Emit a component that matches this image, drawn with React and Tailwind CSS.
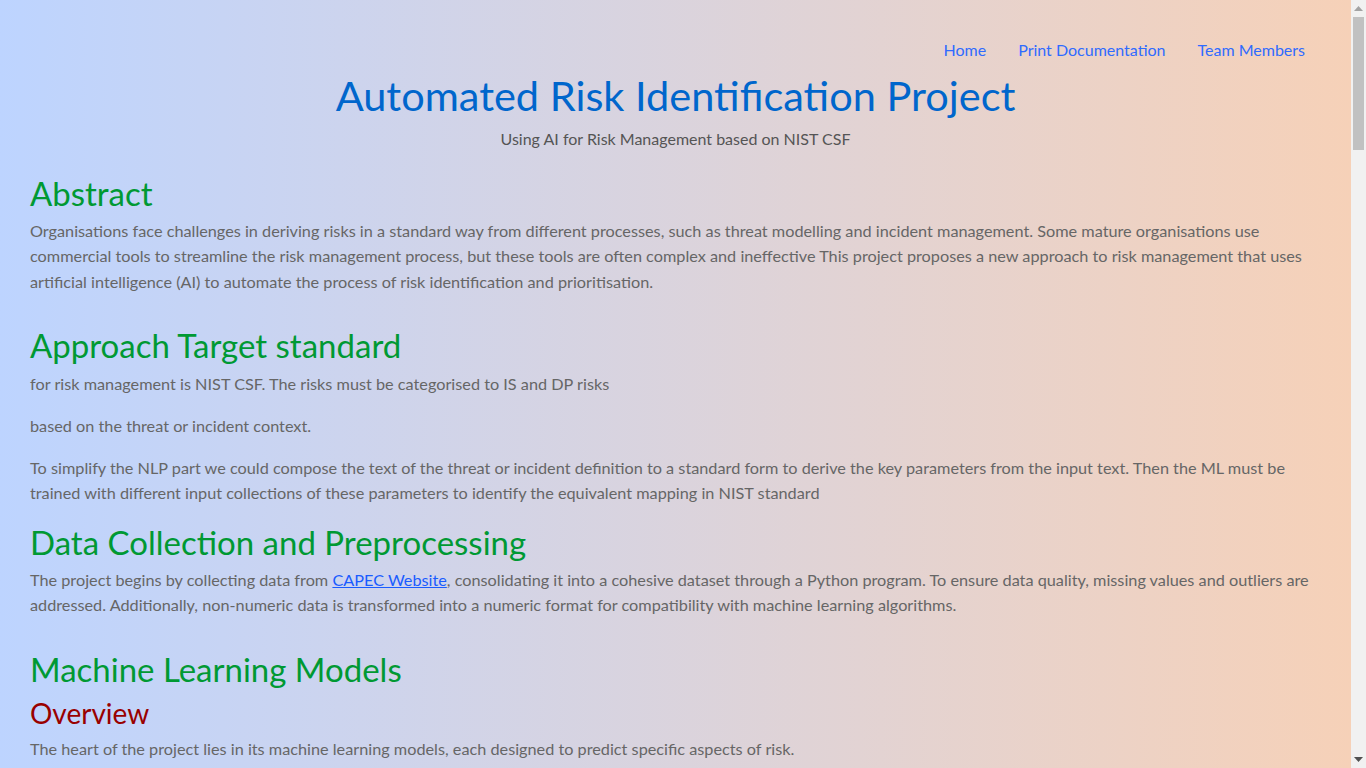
const font = { fontFamily: 'Lato, "Open Sans", sans-serif' };

function NavLink({ children }) {
  return (
    <a href="#" className="px-4 text-[16px] leading-[24px] text-[#2f6bff]">
      {children}
    </a>
  );
}

function SectionHeading({ children }) {
  return (
    <h2 className="text-[33px] leading-[40px] font-normal text-[#009933]">{children}</h2>
  );
}

function Para({ children, className = '' }) {
  return <p className={`text-[16.25px] leading-[25.6px] text-[#666666] ${className}`}>{children}</p>;
}

function Scrollbar() {
  return (
    <div className="flex w-[15px] shrink-0 flex-col bg-[#f1f1f1]">
      <div className="flex h-[17px] items-center justify-center">
        <svg width="9" height="5" viewBox="0 0 9 5">
          <path d="M0 5 L4.5 0 L9 5 Z" fill="#a3a3a3" />
        </svg>
      </div>
      <div className="mx-[2px] h-[133px] bg-[#c1c1c1]" />
      <div className="flex-1" />
      <div className="flex h-[17px] items-center justify-center">
        <svg width="9" height="5" viewBox="0 0 9 5">
          <path d="M0 0 L9 0 L4.5 5 Z" fill="#505050" />
        </svg>
      </div>
    </div>
  );
}

export default function App() {
  return (
    <div className="flex h-screen overflow-hidden" style={font}>
      <main className="min-w-0 flex-1 overflow-hidden bg-gradient-to-r from-[#bdd4ff] to-[#f6d1b8] px-[30px]">
        <nav className="flex justify-end pt-[38px]">
          <NavLink>Home</NavLink>
          <NavLink>Print Documentation</NavLink>
          <NavLink>Team Members</NavLink>
        </nav>

        <header className="mt-[9px] text-center">
          <h1 className="text-[41.5px] leading-[48px] font-normal text-[#0066cc]">
            Automated Risk Identification Project
          </h1>
          <p className="mt-[7px] text-[16px] leading-[25.6px] text-[#555555]">
            Using AI for Risk Management based on NIST CSF
          </p>
        </header>

        <section className="mt-[21px]">
          <SectionHeading>Abstract</SectionHeading>
          <Para className="mt-[5px]">
            Organisations face challenges in deriving risks in a standard way from different processes, such as
            threat modelling and incident management. Some mature organisations use commercial tools to streamline
            the risk management process, but these tools are often complex and ineffective This project proposes a
            new approach to risk management that uses artificial intelligence (AI) to automate the process of risk
            identification and prioritisation.
          </Para>
        </section>

        <section className="mt-[31px]">
          <SectionHeading>Approach Target standard</SectionHeading>
          <Para className="mt-[6px]">
            for risk management is NIST CSF. The risks must be categorised to IS and DP risks
          </Para>
          <Para className="mt-[16px]">based on the threat or incident context.</Para>
          <Para className="mt-[16px]">
            To simplify the NLP part we could compose the text of the threat or incident definition to a standard
            form to derive the key parameters from the input text. Then the ML must be trained with different input
            collections of these parameters to identify the equivalent mapping in NIST standard
          </Para>
        </section>

        <section className="mt-[16px]">
          <SectionHeading>Data Collection and Preprocessing</SectionHeading>
          <Para className="mt-[5px]">
            The project begins by collecting data from{' '}
            <a href="#" className="text-[#1a5cff] underline">
              CAPEC Website
            </a>
            , consolidating it into a cohesive dataset through a Python program. To ensure data quality, missing
            values and outliers are addressed. Additionally, non-numeric data is transformed into a numeric format
            for compatibility with machine learning algorithms.
          </Para>
        </section>

        <section className="mt-[31px]">
          <SectionHeading>Machine Learning Models</SectionHeading>
          <h3 className="mt-[7px] text-[28px] leading-[34px] font-normal text-[#990000]">Overview</h3>
          <Para className="mt-[6px]">
            The heart of the project lies in its machine learning models, each designed to predict specific aspects
            of risk.
          </Para>
        </section>
      </main>
      <Scrollbar />
    </div>
  );
}
